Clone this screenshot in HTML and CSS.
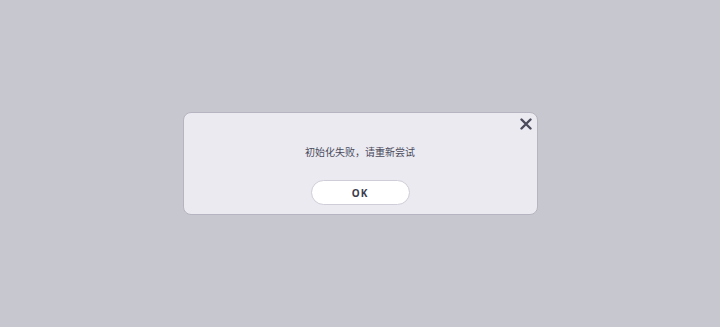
FILE: index.html
```html
<!DOCTYPE html>
<html lang="zh">

<head>
    <meta charset="UTF-8">
    <meta name="viewport" content="width=device-width, initial-scale=1.0">
    <title>提示</title>
    <link rel="stylesheet" href="styles.css">
</head>

<body>
    <div class="overlay">
        <div class="dialog">
            <button class="close-btn" aria-label="close">
                <svg width="12" height="12" viewBox="0 0 12 12">
                    <path d="M1.5 1.5 L10.5 10.5 M10.5 1.5 L1.5 10.5" stroke="#4a4a5c" stroke-width="2.4" stroke-linecap="round"/>
                </svg>
            </button>
            <p class="message">初始化失败，请重新尝试</p>
            <button class="ok-btn">OK</button>
        </div>
    </div>
</body>

</html>
```

FILE: styles.css
```css
* {
    box-sizing: border-box;
    margin: 0;
    padding: 0;
}

body {
    font-family: "Noto Sans", "Noto Sans CJK SC", sans-serif;
    background-color: #c7c7cf;
}

.overlay {
    width: 720px;
    height: 327px;
    display: flex;
    align-items: center;
    justify-content: center;
}

.dialog {
    position: relative;
    width: 355px;
    height: 103px;
    background: #ebeaf1;
    border: 1px solid #b5b4c0;
    border-radius: 8px;
    display: flex;
    flex-direction: column;
    align-items: center;
    padding-top: 32px;
}

.close-btn {
    position: absolute;
    top: 5px;
    right: 5px;
    width: 12px;
    height: 12px;
    border: none;
    background: none;
    cursor: pointer;
    display: flex;
}

.message {
    font-size: 10px;
    line-height: 14px;
    color: #4a4a5c;
}

.ok-btn {
    margin-top: 21px;
    width: 99px;
    height: 25px;
    background: #ffffff;
    border: 1px solid #cfced8;
    border-radius: 13px;
    font-family: "Noto Sans", sans-serif;
    font-size: 10px;
    font-weight: bold;
    letter-spacing: 1px;
    color: #3c3c4c;
    cursor: pointer;
}
```
